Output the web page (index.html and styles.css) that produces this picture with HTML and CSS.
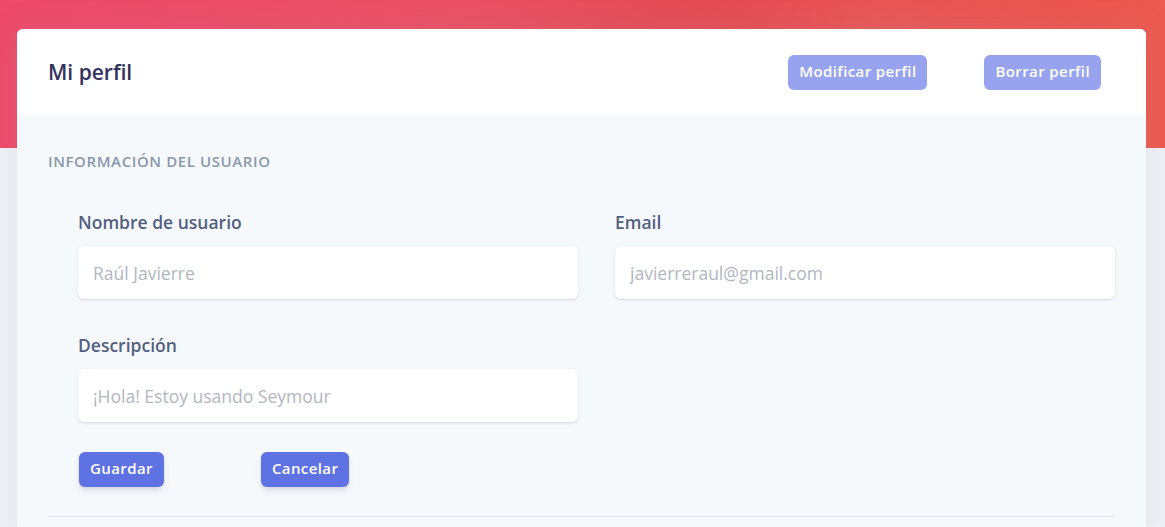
FILE: index.html
```html
<!DOCTYPE html>
<html lang="es">
<head>
<meta charset="utf-8">
<title>Mi perfil</title>
<link rel="stylesheet" href="styles.css">
</head>
<body>
<div class="hero"></div>
<main class="container">
  <section class="card">
    <header class="card-header">
      <h3 class="title">Mi perfil</h3>
      <div class="header-actions">
        <button class="btn btn-soft">Modificar perfil</button>
        <button class="btn btn-soft">Borrar perfil</button>
      </div>
    </header>
    <div class="card-body">
      <h6 class="heading-small">Información del usuario</h6>
      <div class="form-block">
        <div class="form-grid">
          <div class="field">
            <label class="label">Nombre de usuario</label>
            <input class="input" type="text" placeholder="Raúl Javierre">
          </div>
          <div class="field">
            <label class="label">Email</label>
            <input class="input" type="email" placeholder="javierreraul@gmail.com">
          </div>
          <div class="field">
            <label class="label">Descripción</label>
            <input class="input" type="text" placeholder="¡Hola! Estoy usando Seymour">
          </div>
        </div>
        <div class="actions">
          <button class="btn btn-primary">Guardar</button>
          <button class="btn btn-primary">Cancelar</button>
        </div>
      </div>
      <hr class="divider">
    </div>
  </section>
</main>
</body>
</html>
```

FILE: styles.css
```css
* { box-sizing: border-box; }
html, body { margin: 0; padding: 0; }
body {
  background: #f0f1f6;
  font-family: "Open Sans", "Noto Sans", sans-serif;
  color: #525f7f;
  overflow: hidden;
  height: 527px;
}
.hero {
  height: 148px;
  background:
    radial-gradient(ellipse 260px 120px at 78% 20%, rgba(255,255,255,0.06), transparent 70%),
    radial-gradient(ellipse 300px 160px at 58% 0%, rgba(180,40,40,0.10), transparent 70%),
    linear-gradient(87deg, #ee4a6b 0%, #ea5163 45%, #e84e4c 80%, #ec5a50 100%);
}
.container {
  margin-top: -119px;
  padding: 0 19px 0 17px;
}
.card {
  background: #fff;
  border-radius: 6px;
  box-shadow: 0 0 32px 0 rgba(136,152,170,.15);
  overflow: hidden;
}
.card-header {
  height: 86px;
  display: flex;
  align-items: center;
  justify-content: space-between;
  padding: 0 45px 0 31px;
  background: #fff;
}
.title {
  margin: 0;
  font-size: 21px;
  font-weight: 600;
  color: #32325d;
  line-height: 1.3;
  padding-top: 1px;
}
.header-actions {
  display: flex;
  gap: 57px;
  margin-top: 1px;
}
.btn {
  font-family: inherit;
  border: 0;
  color: #fff;
  font-weight: 600;
  font-size: 15px;
  line-height: 20px;
  letter-spacing: 0.4px;
  height: 35px;
  border-radius: 6px;
  padding: 0 11px 3px;
  display: inline-flex;
  align-items: center;
  cursor: pointer;
}
.btn-soft {
  background: #97a3ee;
}
.card-body {
  background: #f6f9fc;
  padding: 37px 31px 0 31px;
  height: 420px;
}
.heading-small {
  margin: 0;
  font-size: 15px;
  line-height: 18px;
  font-weight: 600;
  letter-spacing: 0.6px;
  text-transform: uppercase;
  color: #8898aa;
}
.form-block {
  padding-left: 30px;
  padding-top: 39px;
}
.form-grid {
  display: grid;
  grid-template-columns: 500px 500px;
  column-gap: 37px;
  row-gap: 33px;
}
.field {
  display: flex;
  flex-direction: column;
}
.label {
  font-size: 17.5px;
  font-weight: 600;
  line-height: 26px;
  color: #525f7f;
  margin-bottom: 11px;
}
.input {
  width: 500px;
  height: 53px;
  border: 0;
  border-radius: 6px;
  background: #fff;
  box-shadow: 0 1px 3px rgba(50,50,93,.15), 0 1px 0 rgba(0,0,0,.02);
  padding: 0 15px;
  font-family: inherit;
  font-size: 17.5px;
  color: #8898aa;
  outline: none;
}
.input::placeholder { color: #b0b7c2; }
.actions {
  display: flex;
  gap: 97px;
  margin-top: 30px;
  padding-left: 1px;
}
.btn-primary {
  background: #5e72e4;
  box-shadow: 0 4px 6px rgba(50,50,93,.11), 0 1px 3px rgba(0,0,0,.08);
}
.divider {
  margin: 29px 0 0 0;
  border: 0;
  border-top: 1px solid #dfe3ea;
}
```
